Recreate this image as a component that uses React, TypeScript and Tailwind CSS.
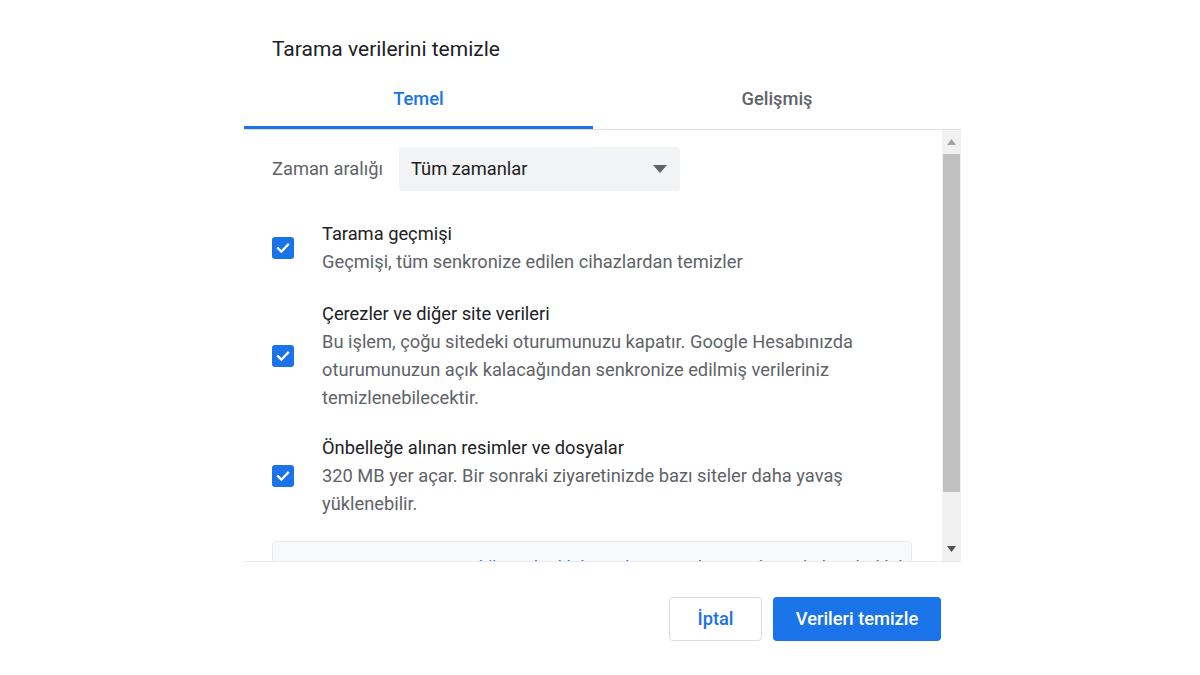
import React from "react";

function Check() {
  return (
    <div className="w-[22px] h-[22px] rounded-[3px] bg-[#1a73e8] flex items-center justify-center shrink-0">
      <svg width="16" height="16" viewBox="0 0 24 24">
        <path d="M4.5 12.5l5 5L19.5 7" fill="none" stroke="#fff" strokeWidth="3.4" strokeLinecap="square" />
      </svg>
    </div>
  );
}

function Item({ title, lines, className }: { title: string; lines: string[]; className?: string }) {
  return (
    <div className={"flex items-center gap-[28px] " + (className ?? "")}>
      <Check />
      <div className="flex flex-col text-[18.3px] leading-[28px]">
        <div className="text-[#202124]">{title}</div>
        {lines.map((l, i) => (
          <div key={i} className="text-[#5f6368] whitespace-nowrap">{l}</div>
        ))}
      </div>
    </div>
  );
}

export default function App() {
  return (
    <div
      className="w-[1200px] h-[675px] bg-white overflow-hidden pl-[244px]"
      style={{ fontFamily: "Roboto, 'Noto Sans', sans-serif" }}
    >
      <div className="w-[717px] flex flex-col">
        <div className="pt-[35px] pl-[28px] h-[72px] text-[21px] leading-[28px] text-[#202124]">
          Tarama verilerini temizle
        </div>
        <div className="flex h-[58px] border-b border-[#dadce0]">
          <div className="w-[349px] flex flex-col">
            <div className="flex-1 flex items-center justify-center text-[18.3px] font-medium text-[#1a73e8]">
              Temel
            </div>
            <div className="h-[3px] bg-[#1a73e8]" />
          </div>
          <div className="flex-1 flex flex-col">
            <div className="flex-1 flex items-center justify-center text-[18.3px] font-medium text-[#5f6368]">
              Gelişmiş
            </div>
            <div className="h-[3px]" />
          </div>
        </div>
        <div className="flex h-[432px] border-b border-[#e8eaed]">
          <div className="flex-1 overflow-hidden pl-[28px] pt-[17px]">
            <div className="flex items-center h-[44px]">
              <div className="text-[18.3px] text-[#5f6368] w-[127px]">Zaman aralığı</div>
              <div className="w-[281px] h-[44px] rounded-[4px] bg-[#f1f3f4] flex items-center justify-between pl-[12px] pr-[13px]">
                <span className="text-[18.3px] text-[#202124]">Tüm zamanlar</span>
                <svg width="14" height="8" viewBox="0 0 14 8">
                  <path d="M0 0h14L7 8z" fill="#5f6368" />
                </svg>
              </div>
            </div>
            <div className="mt-[29px] flex flex-col">
              <Item title="Tarama geçmişi" lines={["Geçmişi, tüm senkronize edilen cihazlardan temizler"]} />
              <Item
                className="mt-[24px]"
                title="Çerezler ve diğer site verileri"
                lines={[
                  "Bu işlem, çoğu sitedeki oturumunuzu kapatır. Google Hesabınızda",
                  "oturumunuzun açık kalacağından senkronize edilmiş verileriniz",
                  "temizlenebilecektir.",
                ]}
              />
              <Item
                className="mt-[22px]"
                title="Önbelleğe alınan resimler ve dosyalar"
                lines={[
                  "320 MB yer açar. Bir sonraki ziyaretinizde bazı siteler daha yavaş",
                  "yüklenebilir.",
                ]}
              />
            </div>
            <div className="mt-[23px] w-[640px] h-[80px] rounded-[4px] border border-[#e8eaed] bg-[#f8f9fa] pt-[12px] px-[50px] text-[18.3px] leading-[28px] text-[#5f6368] whitespace-nowrap overflow-hidden">
              Arama geçmişi ve <span className="text-[#1a73e8]">diğer etkinlik biçimleri</span> Google Hesabınızda kaydedilebilir
            </div>
          </div>
          <div className="w-[19px] bg-[#f1f1f1] flex flex-col items-center">
            <div className="h-[24px] flex items-center justify-center">
              <svg width="9" height="6" viewBox="0 0 9 6">
                <path d="M0 6h9L4.5 0z" fill="#a3a3a3" />
              </svg>
            </div>
            <div className="w-[17px] h-[338px] bg-[#c1c1c1]" />
            <div className="flex-1" />
            <div className="h-[24px] flex items-center justify-center">
              <svg width="9" height="6" viewBox="0 0 9 6">
                <path d="M0 0h9L4.5 6z" fill="#505050" />
              </svg>
            </div>
          </div>
        </div>
        <div className="flex justify-end gap-[11px] pr-[20px] pt-[35px]">
          <button className="w-[93px] h-[44px] rounded-[4px] border border-[#dadce0] bg-white text-[18.3px] font-medium text-[#1a73e8]">
            İptal
          </button>
          <button className="w-[168px] h-[44px] rounded-[4px] bg-[#1a73e8] text-[18.3px] font-medium text-white">
            Verileri temizle
          </button>
        </div>
      </div>
    </div>
  );
}
